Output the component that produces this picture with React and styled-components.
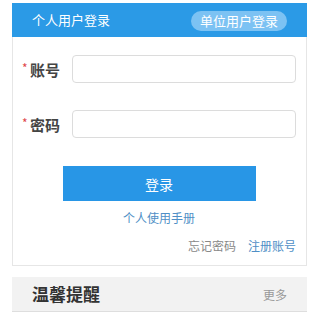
import styled, { createGlobalStyle } from "styled-components";

const Global = createGlobalStyle`
  body {
    margin: 0;
    background: #fff;
    font-family: "Noto Sans CJK SC", "Noto Sans", sans-serif;
  }
`;

const Page = styled.div`
  padding: 3px 8px 0 12px;
  width: 315px;
  box-sizing: border-box;
`;

const Card = styled.div`
  border: 1px solid #e6e6e6;
  border-top: none;
`;

const Header = styled.div`
  height: 34px;
  margin: 0 -1px;
  background: #2b9ae6;
  display: flex;
  align-items: center;
  justify-content: space-between;
  padding: 0 20px 0 20px;
`;

const Tab = styled.span`
  color: #fff;
  font-size: 13px;
  line-height: 20px;
  ${(p) =>
    p.pill &&
    `
    background: #7cc2f3;
    border-radius: 10px;
    padding: 0 9px;
    height: 20px;
    margin-top: 1px;
  `}
`;

const Form = styled.div`
  padding: 18px 10px 10px 9px;
  display: flex;
  flex-direction: column;
`;

const Row = styled.div`
  display: flex;
  align-items: center;
  margin-bottom: ${(p) => p.gap || 0}px;
`;

const Label = styled.label`
  width: 50px;
  display: flex;
  align-items: center;
  font-size: 15px;
  font-weight: bold;
  color: #444;
`;

const Star = styled.span`
  color: #e0464a;
  font-size: 12px;
  font-weight: normal;
  width: 8px;
  margin-top: -3px;
`;

const Input = styled.input`
  flex: 1;
  height: 28px;
  box-sizing: border-box;
  border: 1px solid #dcdcdc;
  border-radius: 4px;
  outline: none;
`;

const Button = styled.button`
  align-self: center;
  width: 193px;
  height: 35px;
  margin: 28px 0 0 0;
  border: none;
  background: #2896e6;
  color: #fff;
  font-size: 14px;
  font-family: inherit;
`;

const Manual = styled.a`
  align-self: center;
  margin-top: 8px;
  font-size: 12px;
  color: #4f8fc6;
  line-height: 18px;
`;

const Links = styled.div`
  display: flex;
  justify-content: flex-end;
  gap: 12px;
  margin-top: 10px;
  font-size: 12px;
  line-height: 18px;
`;

const Link = styled.a`
  color: ${(p) => (p.blue ? "#4f8fc6" : "#888")};
`;

const Notice = styled.div`
  margin-top: 11px;
  height: 34px;
  background: #f2f2f2;
  border-bottom: 1px solid #dedede;
  display: flex;
  align-items: center;
  justify-content: space-between;
  padding: 0 20px;
`;

const NoticeTitle = styled.span`
  font-size: 17px;
  line-height: 22px;
  font-weight: bold;
  color: #333;
`;

const More = styled.span`
  font-size: 12px;
  color: #999;
`;

export default function App() {
  return (
    <>
      <Global />
      <Page>
        <Card>
          <Header>
            <Tab>个人用户登录</Tab>
            <Tab pill>单位用户登录</Tab>
          </Header>
          <Form>
            <Row gap={27}>
              <Label>
                <Star>*</Star>账号
              </Label>
              <Input />
            </Row>
            <Row>
              <Label>
                <Star>*</Star>密码
              </Label>
              <Input type="password" />
            </Row>
            <Button>登录</Button>
            <Manual>个人使用手册</Manual>
            <Links>
              <Link>忘记密码</Link>
              <Link blue>注册账号</Link>
            </Links>
          </Form>
        </Card>
        <Notice>
          <NoticeTitle>温馨提醒</NoticeTitle>
          <More>更多</More>
        </Notice>
      </Page>
    </>
  );
}
